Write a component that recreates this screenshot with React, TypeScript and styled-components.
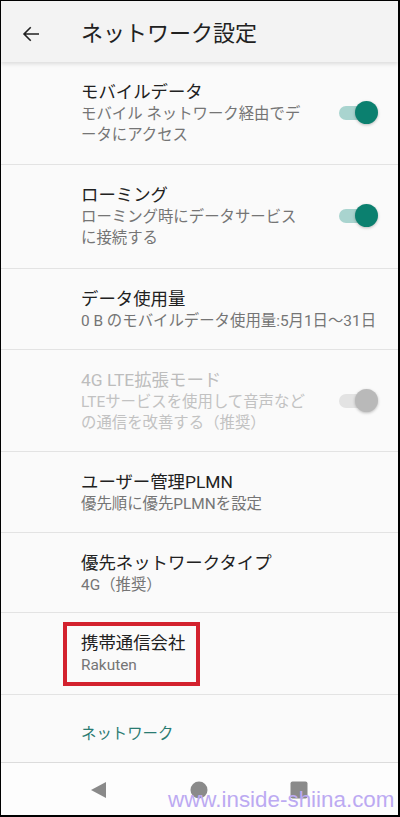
import React from "react";
import styled, { createGlobalStyle } from "styled-components";

const Global = createGlobalStyle`
  html, body { margin: 0; padding: 0; background: #fff; }
  * { box-sizing: border-box; }
`;

const Frame = styled.div`
  position: relative;
  width: 400px;
  height: 817px;
  border-top: 1px solid #000;
  border-left: 1px solid #000;
  border-right: 2px solid #000;
  border-bottom: 2px solid #000;
  background: #fafafa;
  display: flex;
  flex-direction: column;
  overflow: hidden;
  font-family: Roboto, "Noto Sans CJK JP", sans-serif;
`;

const Header = styled.header`
  position: relative;
  z-index: 1;
  height: 61px;
  flex: none;
  background: #f3f3f3;
  display: flex;
  align-items: center;
  box-shadow: 0 2px 4px rgba(0, 0, 0, 0.12);
`;

const BackButton = styled.div`
  width: 24px;
  height: 24px;
  margin-left: 18px;
  margin-top: 4px;
  display: flex;
  color: #222;
`;

const Title = styled.h1`
  margin: 0 0 0 38px;
  font-size: 22px;
  font-weight: 400;
  color: #212121;
  line-height: 28px;
  padding-top: 4px;
`;

const List = styled.div`
  flex: none;
  display: flex;
  flex-direction: column;
`;

const Item = styled.div<{ $padBottom?: number }>`
  display: flex;
  align-items: center;
  padding: 18px 0 ${(p) => p.$padBottom ?? 17}px 80px;
  border-bottom: 1px solid #e3e3e3;
`;

const ItemText = styled.div`
  flex: 1;
  display: flex;
  flex-direction: column;
  max-width: 234px;
`;

const ItemTitle = styled.div<{ $disabled?: boolean }>`
  font-size: 17.4px;
  line-height: 24px;
  color: ${(p) => (p.$disabled ? "#bdbdbd" : "#212121")};
`;

const ItemSummary = styled.div<{ $disabled?: boolean; $wide?: boolean }>`
  font-size: 15.4px;
  line-height: 21px;
  color: ${(p) => (p.$disabled ? "#c2c2c2" : "#757575")};
  white-space: ${(p) => (p.$wide ? "nowrap" : "normal")};
`;

const Switch = styled.div<{ $disabled?: boolean }>`
  position: relative;
  width: 40px;
  height: 24px;
  margin-left: auto;
  margin-right: 20px;
  flex: none;
  &::before {
    content: "";
    position: absolute;
    left: 1px;
    top: 5px;
    width: 32px;
    height: 14px;
    border-radius: 7px;
    background: ${(p) => (p.$disabled ? "#e3e3e3" : "#a9d4cf")};
  }
  &::after {
    content: "";
    position: absolute;
    right: 0;
    top: 0;
    width: 23px;
    height: 23px;
    border-radius: 50%;
    background: ${(p) => (p.$disabled ? "#b9b9b9" : "#0b806f")};
    box-shadow: 0 1px 3px rgba(0, 0, 0, 0.25);
  }
`;

const Highlight = styled.div`
  margin: -9px 0 -9px -18px;
  padding: 5px 10px 6px 14px;
  border: 4px solid #d3222e;
  width: 137px;
`;

const Category = styled.div`
  height: 68px;
  flex: none;
  display: flex;
  align-items: center;
  padding-left: 80px;
  padding-top: 6px;
  font-size: 15.4px;
  color: #2a7b72;
  border-bottom: 1px solid #dcdcdc;
`;

const NavBar = styled.nav`
  flex: 1;
  background: #fdfdfd;
  display: flex;
  align-items: center;
  justify-content: space-between;
  padding: 2px 90px 0 89px;
`;

const NavIcon = styled.svg`
  width: 18px;
  height: 18px;
  fill: #8a8a8a;
`;

const Watermark = styled.div`
  position: absolute;
  left: 167px;
  bottom: 3px;
  font-family: "Liberation Sans", Arial, sans-serif;
  font-size: 22.4px;
  line-height: 24px;
  color: #bcaaf2;
  pointer-events: none;
`;

type Row = {
  title: string;
  summary: string[];
  toggle?: boolean;
  disabled?: boolean;
  wide?: boolean;
  padBottom?: number;
};

const rows: Row[] = [
  {
    title: "モバイルデータ",
    summary: ["モバイル ネットワーク経由でデ", "ータにアクセス"],
    toggle: true,
    padBottom: 18,
  },
  {
    title: "ローミング",
    summary: ["ローミング時にデータサービス", "に接続する"],
    toggle: true,
    padBottom: 19,
  },
  { title: "データ使用量", summary: ["0 B のモバイルデータ使用量:5月1日〜31日"], wide: true },
  {
    title: "4G LTE拡張モード",
    summary: ["LTEサービスを使用して音声など", "の通信を改善する（推奨）"],
    toggle: true,
    disabled: true,
  },
  { title: "ユーザー管理PLMN", summary: ["優先順に優先PLMNを設定"] },
  { title: "優先ネットワークタイプ", summary: ["4G（推奨）"], padBottom: 16 },
];

export default function App() {
  return (
    <>
      <Global />
      <Frame>
        <Header>
          <BackButton>
            <svg viewBox="0 0 24 24" width="24" height="24" fill="currentColor">
              <path d="M20 11.2H6.9l5.4-5.4L11.2 4.7 3.9 12l7.3 7.3 1.1-1.1-5.4-5.4H20z" />
            </svg>
          </BackButton>
          <Title>ネットワーク設定</Title>
        </Header>
        <List>
          {rows.map((r) => (
            <Item key={r.title} $padBottom={r.padBottom}>
              <ItemText>
                <ItemTitle $disabled={r.disabled}>{r.title}</ItemTitle>
                {r.summary.map((s) => (
                  <ItemSummary key={s} $disabled={r.disabled} $wide={r.wide}>
                    {s}
                  </ItemSummary>
                ))}
              </ItemText>
              {r.toggle && <Switch $disabled={r.disabled} />}
            </Item>
          ))}
          <Item>
            <Highlight>
              <ItemTitle>携帯通信会社</ItemTitle>
              <ItemSummary>Rakuten</ItemSummary>
            </Highlight>
          </Item>
          <Category>ネットワーク</Category>
        </List>
        <NavBar>
          <NavIcon viewBox="0 0 18 18">
            <path d="M1 9 L16 1 L16 17 Z" />
          </NavIcon>
          <NavIcon viewBox="0 0 18 18">
            <circle cx="9" cy="9" r="8.5" />
          </NavIcon>
          <NavIcon viewBox="0 0 18 18">
            <rect x="0.5" y="0.5" width="17" height="17" rx="2" />
          </NavIcon>
        </NavBar>
        <Watermark>www.inside-shiina.com</Watermark>
      </Frame>
    </>
  );
}
